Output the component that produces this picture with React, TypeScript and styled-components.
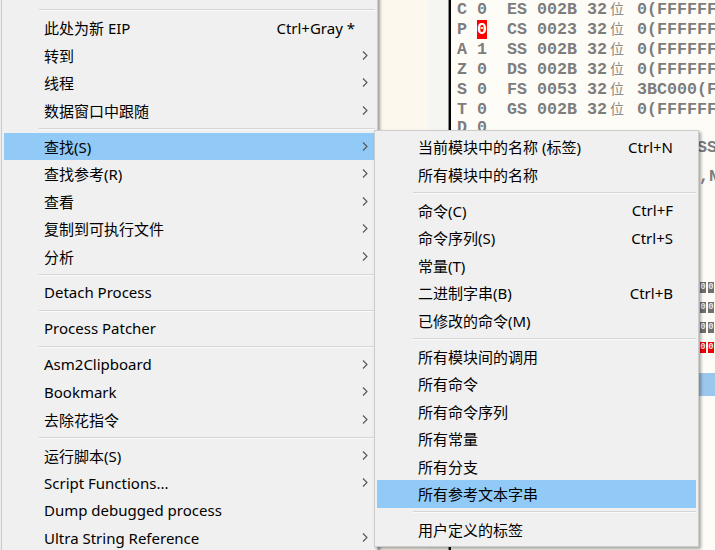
import styled, { createGlobalStyle } from "styled-components";

type Entry =
  | { sep: true }
  | { sep?: false; label: string; shortcut?: string; sub?: boolean; active?: boolean };

const mainEntries: Entry[] = [
  { label: "" },
  { sep: true },
  { label: "此处为新 EIP", shortcut: "Ctrl+Gray *" },
  { label: "转到", sub: true },
  { label: "线程", sub: true },
  { label: "数据窗口中跟随", sub: true },
  { sep: true },
  { label: "查找(S)", sub: true, active: true },
  { label: "查找参考(R)", sub: true },
  { label: "查看", sub: true },
  { label: "复制到可执行文件", sub: true },
  { label: "分析", sub: true },
  { sep: true },
  { label: "Detach Process" },
  { sep: true },
  { label: "Process Patcher" },
  { sep: true },
  { label: "Asm2Clipboard", sub: true },
  { label: "Bookmark", sub: true },
  { label: "去除花指令", sub: true },
  { sep: true },
  { label: "运行脚本(S)", sub: true },
  { label: "Script Functions...", sub: true },
  { label: "Dump debugged process" },
  { label: "Ultra String Reference", sub: true },
];

const findEntries: Entry[] = [
  { label: "当前模块中的名称 (标签)", shortcut: "Ctrl+N" },
  { label: "所有模块中的名称" },
  { sep: true },
  { label: "命令(C)", shortcut: "Ctrl+F" },
  { label: "命令序列(S)", shortcut: "Ctrl+S" },
  { label: "常量(T)" },
  { label: "二进制字串(B)", shortcut: "Ctrl+B" },
  { label: "已修改的命令(M)" },
  { sep: true },
  { label: "所有模块间的调用" },
  { label: "所有命令" },
  { label: "所有命令序列" },
  { label: "所有常量" },
  { label: "所有分支" },
  { label: "所有参考文本字串", active: true },
  { sep: true },
  { label: "用户定义的标签" },
];

const segRows = [
  { flag: "C", bit: "0", seg: "ES", sel: "002B", base: "0(FFFFFFFF)" },
  { flag: "P", bit: "0", seg: "CS", sel: "0023", base: "0(FFFFFFFF)", hot: true },
  { flag: "A", bit: "1", seg: "SS", sel: "002B", base: "0(FFFFFFFF)" },
  { flag: "Z", bit: "0", seg: "DS", sel: "002B", base: "0(FFFFFFFF)" },
  { flag: "S", bit: "0", seg: "FS", sel: "0053", base: "3BC000(FFF)" },
  { flag: "T", bit: "0", seg: "GS", sel: "002B", base: "0(FFFFFFFF)" },
];

const Chevron = () => (
  <svg width="6" height="9" viewBox="0 0 6 9">
    <path d="M1 0.5 L5 4.5 L1 8.5" fill="none" stroke="#555" strokeWidth="1.1" />
  </svg>
);

const Menu = ({
  entries,
  left,
  top,
  width,
  indent,
  tail,
}: {
  entries: Entry[];
  left: number;
  top: number;
  width: number;
  indent: number;
  tail: number;
}) => (
  <MenuPanel $left={left} $top={top} $width={width}>
    {entries.map((e, i) =>
      e.sep ? (
        <Separator key={i} $indent={indent - 5} />
      ) : (
        <Item key={i} $active={e.active} $indent={indent}>
          <Label>{e.label}</Label>
          {e.shortcut && <Shortcut>{e.shortcut}</Shortcut>}
          <Tail $w={tail}>{e.sub && <Chevron />}</Tail>
        </Item>
      )
    )}
  </MenuPanel>
);

const App = () => (
  <>
    <GlobalStyle />
    <Screen>
      <Underlay />
      <Strip $w={48} $bg="#fcf8ee" />
      <Strip $w={20} $bg="#f5f5f2" />
      <Divider />
      <Registers>
        {segRows.map((r) => (
          <Row key={r.flag}>
            {r.flag} {r.hot ? <Hot>{r.bit}</Hot> : r.bit}
            {"  "}
            {r.seg} {r.sel} 32<Wide>位</Wide> {r.base}
          </Row>
        ))}
        <Row>D 0</Row>
        <Row $indent={240}>SS</Row>
        <Gap $h={9} />
        <Row $indent={242}>,N</Row>
        <Gap $h={91} />
        {["grey", "grey", "grey", "red"].map((c, i) => (
          <Row key={i} $indent={243}>
            <Cell $red={c === "red"}>0</Cell>
            <Cell $red={c === "red"}>0</Cell>
          </Row>
        ))}
        <Gap $h={15} />
        <Selected />
      </Registers>

      <Menu entries={mainEntries} left={1} top={-25} width={377} indent={40} tail={20} />
      <Menu entries={findEntries} left={374} top={130} width={325} indent={41} tail={23} />
    </Screen>
  </>
);

export default App;

const GlobalStyle = createGlobalStyle`
  body {
    margin: 0;
    background: #fefcf6;
  }
`;

const Screen = styled.div`
  position: relative;
  display: flex;
  width: 715px;
  height: 550px;
  overflow: hidden;
`;

const Underlay = styled.div`
  width: 380px;
  flex: none;
  background: #f0f0f0;
`;

const Strip = styled.div<{ $w: number; $bg: string }>`
  width: ${(p) => p.$w}px;
  flex: none;
  background: ${(p) => p.$bg};
`;

const Divider = styled.div`
  width: 2px;
  flex: none;
  background: #000;
  border-left: 1px solid #8a8a8a;
`;

const Registers = styled.div`
  flex: 1;
  margin-top: -2px;
  padding-left: 6px;
  background: #fefcf6;
  font-family: "Liberation Mono", monospace;
  font-weight: bold;
  font-size: 16.67px;
  color: #7d7d7d;
`;

const Row = styled.div<{ $indent?: number }>`
  height: 20px;
  line-height: 20px;
  white-space: pre;
  padding-left: ${(p) => p.$indent ?? 0}px;
`;

const Gap = styled.div<{ $h: number }>`
  height: ${(p) => p.$h}px;
`;

const Hot = styled.span`
  background: #ff0000;
  color: #ffffff;
`;

const Wide = styled.span`
  display: inline-block;
  width: 20px;
  padding-left: 3px;
  box-sizing: border-box;
  font-family: "Noto Sans CJK SC", sans-serif;
  font-weight: normal;
  font-size: 14px;
  color: #8a8a8a;
`;

const Cell = styled.span<{ $red?: boolean }>`
  display: inline-block;
  width: 6px;
  height: 11px;
  margin-right: 2px;
  vertical-align: middle;
  background: ${(p) => (p.$red ? "#ee0000" : "#6f6f6f")};
  color: #e6e6e6;
  font-size: 9px;
  line-height: 11px;
  text-align: center;
`;

const Selected = styled.div`
  height: 23px;
  margin-left: -6px;
  background: #9cc7ec;
`;

const MenuPanel = styled.div<{ $left: number; $top: number; $width: number }>`
  position: absolute;
  left: ${(p) => p.$left}px;
  top: ${(p) => p.$top}px;
  width: ${(p) => p.$width}px;
  box-sizing: border-box;
  padding: 2px;
  background: #f0f0f0;
  border: 1px solid #cccccc;
  box-shadow: 2px 2px 3px rgba(0, 0, 0, 0.35);
  font-family: "Noto Sans", "Noto Sans CJK SC", sans-serif;
  font-size: 15px;
  color: #000;
`;

const Item = styled.div<{ $active?: boolean; $indent: number }>`
  display: flex;
  align-items: center;
  height: 27.5px;
  padding-left: ${(p) => p.$indent}px;
  background: ${(p) => (p.$active ? "#91c9f7" : "transparent")};
  white-space: nowrap;
`;

const Label = styled.span`
  flex: 1;
`;

const Shortcut = styled.span`
  flex: none;
`;

const Tail = styled.span<{ $w: number }>`
  display: flex;
  justify-content: center;
  align-items: center;
  width: ${(p) => p.$w}px;
  flex: none;
`;

const Separator = styled.div<{ $indent: number }>`
  display: flex;
  align-items: center;
  height: 8.5px;
  padding-left: ${(p) => p.$indent}px;

  &::after {
    content: "";
    flex: 1;
    height: 1px;
    background: #d5d5d5;
    box-shadow: 0 1px 0 #fafafa;
  }
`;
